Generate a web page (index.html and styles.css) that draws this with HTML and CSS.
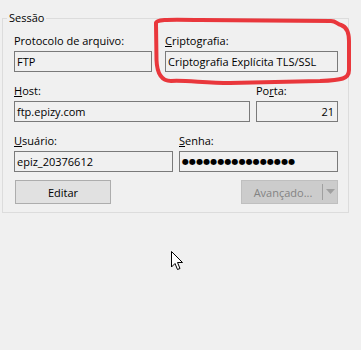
FILE: index.html
```html
<!DOCTYPE html>
<html lang="pt">
<head>
<meta charset="utf-8">
<link rel="stylesheet" href="styles.css">
</head>
<body>
<div class="group">
  <div class="legend">Sessão</div>
  <div class="row row-1">
    <div class="field">
      <div class="label">Protocolo de arquivo:</div>
      <div class="box">FTP</div>
    </div>
    <div class="field">
      <div class="label"><u>C</u>riptografia:</div>
      <div class="box">Criptografia Explícita TLS/SSL</div>
    </div>
  </div>
  <div class="row row-2">
    <div class="field">
      <div class="label"><u>H</u>ost:</div>
      <div class="box">ftp.epizy.com</div>
    </div>
    <div class="field">
      <div class="label">Po<u>r</u>ta:</div>
      <div class="box right">21</div>
    </div>
  </div>
  <div class="row row-3">
    <div class="field">
      <div class="label"><u>U</u>suário:</div>
      <div class="box">epiz_20376612</div>
    </div>
    <div class="field">
      <div class="label"><u>S</u>enha:</div>
      <div class="box"><span class="dots">●●●●●●●●●●●●●●●●</span></div>
    </div>
  </div>
  <div class="row row-4">
    <button class="btn">Editar</button>
    <button class="btn btn-split" disabled>
      <span class="btn-main">Avançado...</span>
      <span class="btn-arrow"><svg width="9" height="6" viewBox="0 0 9 6"><path d="M0 0H9L4.5 5Z" fill="#a0a0a0"/></svg></span>
    </button>
  </div>
</div>
<svg class="marker" width="361" height="350" viewBox="0 0 361 350">
  <path d="M156 24 C155 19 168 19.5 200 20 L331 21 C336 21 337 24 341 25 C347 27 349 32 349 41 L349 70 C349 79 342 80 320 81 L230 83 C205 83 185 80 171 81 C161 81 157 73 156.5 60 Z" fill="none" stroke="#e9373c" stroke-width="4" stroke-linejoin="round"/>
</svg>
<svg class="cursor" width="14" height="20" viewBox="0 0 14 20">
  <path d="M0.5 0.5 L0.5 16 L4 12.5 L6.5 18.5 L9 17.5 L6.5 11.5 L11.5 11.5 Z" fill="#fff" stroke="#000" stroke-width="1" stroke-linejoin="miter"/>
</svg>
</body>
</html>
```
FILE: styles.css
```css
html, body {
  margin: 0;
  padding: 0;
  background: #f0f0f0;
}
body {
  width: 361px;
  height: 350px;
  position: relative;
  overflow: hidden;
  font-family: "Open Sans", "Noto Sans", sans-serif;
  font-size: 11px;
  color: #000;
}
.group {
  box-sizing: border-box;
  width: 347px;
  margin: 18px 0 0 2px;
  padding: 0 10px 8px 11px;
  border: 1px solid #dcdcdc;
}
.legend {
  width: fit-content;
  margin: -8px 0 0 -7px;
  padding: 0 2px;
  background: #f0f0f0;
  line-height: 14px;
  height: 15px;
}
.row {
  display: grid;
  margin-top: 13px;
}
.row-1 {
  margin-top: 9px;
  grid-template-columns: 138px 173px;
  column-gap: 13px;
}
.row-2 {
  grid-template-columns: 236px 82px;
  column-gap: 6px;
}
.row-3 {
  grid-template-columns: 159px 159px;
  column-gap: 6px;
}
.row-4 {
  display: flex;
  justify-content: space-between;
  margin-top: 8px;
}
.label {
  height: 15px;
  line-height: 11px;
  margin-bottom: 1px;
  white-space: nowrap;
}
.label u {
  text-underline-offset: 1px;
}
.box {
  box-sizing: border-box;
  height: 21px;
  border: 1px solid #7a7a7a;
  background: #f0f0f0;
  padding: 0 3px 0 2px;
  line-height: 19px;
  white-space: nowrap;
  overflow: hidden;
}
.box.right {
  text-align: right;
}
.dots {
  font-family: "DejaVu Sans", sans-serif;
  font-size: 8px;
  letter-spacing: 0.1px;
  vertical-align: top;
  line-height: 19px;
}
.btn {
  box-sizing: border-box;
  height: 24px;
  margin: 0;
  padding: 0;
  font: inherit;
  color: #000;
  border: 1px solid #adadad;
  background: #e1e1e1;
  border-radius: 0;
}
.btn:first-child {
  width: 96px;
  margin-left: 1px;
}
.btn-split {
  width: 97px;
  display: flex;
  align-items: stretch;
  background: #cccccc;
  border-color: #bfbfbf;
  color: #838383;
}
.btn-main {
  flex: 1;
  display: flex;
  align-items: center;
  justify-content: center;
  padding-left: 2px;
}
.btn-arrow {
  width: 14px;
  display: flex;
  align-items: center;
  justify-content: center;
  border-left: 1px solid #a0a0a0;
  margin: 3px 0;
}
.marker {
  position: absolute;
  left: 0;
  top: 0;
  pointer-events: none;
}
.cursor {
  position: absolute;
  left: 171px;
  top: 251px;
}
```
